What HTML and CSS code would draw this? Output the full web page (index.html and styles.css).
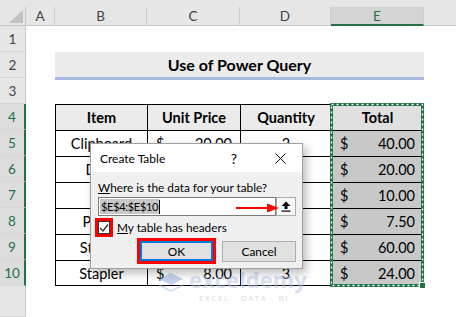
FILE: index.html
```html
<!DOCTYPE html>
<html lang="en">
<head>
  <meta charset="UTF-8">
  <meta name="viewport" content="width=device-width, initial-scale=1.0">
  <title>Use of Power Query - Create Table</title>
  <link rel="stylesheet" href="styles.css">
</head>
<body>

  <div class="sheet">
    <!-- column headers -->
    <div class="strip"></div>
    <div class="corner"><span class="tri"></span></div>
    <div class="ch">A</div>
    <div class="ch">B</div>
    <div class="ch">C</div>
    <div class="ch">D</div>
    <div class="ch sel">E</div>
    <div class="ch rest"></div>

    <!-- rows 1 - 3 -->
    <div class="rh">1</div><div class="blank"></div>
    <div class="rh">2</div><div class="cell"></div><div class="title">Use of Power Query</div><div class="cell"></div>
    <div class="rh">3</div><div class="blank"></div>

    <!-- table -->
    <div class="rh sel">4</div><div class="cell"></div>
    <div class="tc th">Item</div>
    <div class="tc th">Unit Price</div>
    <div class="tc th">Quantity</div>
    <div class="tc th tot r">Total</div>
    <div class="cell"></div>

    <div class="rh sel">5</div><div class="cell"></div>
    <div class="tc">Clipboard</div>
    <div class="tc money"><span>$</span><span>20.00</span></div>
    <div class="tc">2</div>
    <div class="tc money hl r"><span>$</span><span>40.00</span></div>
    <div class="cell"></div>

    <div class="rh sel">6</div><div class="cell"></div>
    <div class="tc">Desk</div>
    <div class="tc money"><span>$</span><span>10.00</span></div>
    <div class="tc">2</div>
    <div class="tc money hl r"><span>$</span><span>20.00</span></div>
    <div class="cell"></div>

    <div class="rh sel">7</div><div class="cell"></div>
    <div class="tc">Pin</div>
    <div class="tc money"><span>$</span><span>2.00</span></div>
    <div class="tc">5</div>
    <div class="tc money hl r"><span>$</span><span>10.00</span></div>
    <div class="cell"></div>

    <div class="rh sel">8</div><div class="cell"></div>
    <div class="tc">Pencil</div>
    <div class="tc money"><span>$</span><span>1.50</span></div>
    <div class="tc">5</div>
    <div class="tc money hl r"><span>$</span><span>7.50</span></div>
    <div class="cell"></div>

    <div class="rh sel">9</div><div class="cell"></div>
    <div class="tc">Sticker</div>
    <div class="tc money"><span>$</span><span>12.00</span></div>
    <div class="tc">5</div>
    <div class="tc money hl r"><span>$</span><span>60.00</span></div>
    <div class="cell"></div>

    <div class="rh sel">10</div><div class="cell"></div>
    <div class="tc b">Stapler</div>
    <div class="tc money b"><span>$</span><span>8.00</span></div>
    <div class="tc b">3</div>
    <div class="tc money hl r b"><span>$</span><span>24.00</span></div>
    <div class="cell"></div>

    <div class="rh"></div><div class="blank"></div>

    <!-- marching ants round E4:E10 -->
    <svg class="ants" width="96" height="186" viewBox="0 0 96 186">
      <rect x="1.5" y="1.5" width="91" height="181" fill="none" stroke="#217346" stroke-width="3"/>
      <rect x="1.5" y="1.5" width="91" height="181" fill="none" stroke="#fff" stroke-width="1.3" stroke-dasharray="2 3"/>
      <rect x="89.5" y="179.5" width="6" height="6" fill="#217346" stroke="#fff" stroke-width="1"/>
    </svg>

    <!-- watermark -->
    <div class="watermark">
      <svg class="wm-logo" width="28" height="22" viewBox="0 0 28 22">
        <path d="M2 8 L14 2 L26 8 L14 14 Z" fill="#8fa8dc"/>
        <path d="M2 13 L14 19 L26 13 L26 15 L14 21 L2 15 Z" fill="#a9bce6"/>
      </svg>
      <div class="wm-text">
        <div class="wm-name">exceldemy</div>
        <div class="wm-tag">EXCEL · DATA · BI</div>
      </div>
    </div>

    <!-- Create Table dialog -->
    <div class="dialog">
      <div class="dlg-head">
        <span class="name">Create Table</span>
        <span class="help">?</span>
        <span class="close">
          <svg width="11" height="11" viewBox="0 0 11 11"><path d="M0.5 0.5 L10.5 10.5 M10.5 0.5 L0.5 10.5" stroke="#000" stroke-width="1"/></svg>
        </span>
      </div>
      <div class="dlg-body">
        <div class="label"><u>W</u>here is the data for your table?</div>
        <div class="range">
          <div class="field"><span class="sel-text">$E$4:$E$10</span><span class="caret"></span></div>
          <div class="pick">
            <svg width="10" height="11" viewBox="0 0 10 11">
              <path d="M5 0.5 L9.5 5 L6.5 5 L6.5 8 L3.5 8 L3.5 5 L0.5 5 Z" fill="#000"/>
              <rect x="0.5" y="9.5" width="9" height="1.2" fill="#000"/>
            </svg>
          </div>
        </div>
        <div class="check-row">
          <span class="mark">
            <span class="box">
              <svg width="10" height="10" viewBox="0 0 10 10"><path d="M1 5 L4 8 L9 1.5" fill="none" stroke="#333" stroke-width="1.4"/></svg>
            </span>
          </span>
          <span class="check-label"><u>M</u>y table has headers</span>
        </div>
        <div class="buttons">
          <span class="ok-wrap"><span class="btn ok">OK</span></span>
          <span class="btn cancel">Cancel</span>
        </div>
      </div>
      <svg class="arrow" width="43" height="10" viewBox="0 0 43 10">
        <path d="M0 5 L32 5" stroke="#ff0000" stroke-width="2"/>
        <path d="M31 0.5 L43 5 L31 9.5 Z" fill="#ff0000"/>
      </svg>
    </div>
  </div>

</body>
</html>
```

FILE: styles.css
```css
* {
  box-sizing: border-box;
}

body {
  margin: 0;
  background: #fff;
  font-family: Lato, "Liberation Sans", sans-serif;
  overflow: hidden;
}

.sheet {
  position: relative;
  display: grid;
  grid-template-columns: 26px 29px 92px 93px 91px 93px 1fr;
  grid-template-rows: 7px 19px repeat(10, 26px) 31px;
  width: 456px;
  height: 317px;
  overflow: hidden;
}

/* headers */
.strip {
  grid-column: 1 / -1;
  background: #e6e6e6;
}

.corner {
  background: #e6e6e6;
  border-right: 1px solid #c8c8c8;
  border-bottom: 1px solid #c8c8c8;
  display: flex;
  align-items: flex-end;
  justify-content: flex-end;
  padding: 0 2px 2px 0;
}

.tri {
  width: 0;
  height: 0;
  border-left: 14px solid transparent;
  border-bottom: 13px solid #c2c2c2;
}

.ch {
  background: #e6e6e6;
  border-right: 1px solid #cdcdcd;
  border-bottom: 1px solid #c8c8c8;
  display: flex;
  align-items: center;
  justify-content: center;
  font-size: 13.5px;
  color: #444;
}

.ch.sel {
  background: #d4d4d4;
  color: #217346;
  border-bottom: 2px solid #217346;
}

.ch.rest {
  border-right: none;
}

.rh {
  background: #e6e6e6;
  border-right: 1px solid #c8c8c8;
  border-bottom: 1px solid #d6d6d6;
  display: flex;
  align-items: center;
  justify-content: center;
  font-size: 13.5px;
  color: #444;
}

.rh.sel {
  background: #dcdcdc;
  color: #217346;
  border-right: 2px solid #217346;
}

/* cells */
.blank {
  grid-column: 2 / -1;
}

.title {
  grid-column: 3 / 7;
  height: 28px;
  background: #ececec;
  border-bottom: 3px solid #a7b9de;
  display: flex;
  align-items: center;
  justify-content: center;
  font-size: 16px;
  font-weight: bold;
  color: #000;
}

.tc {
  border-left: 1px solid #000;
  border-top: 1px solid #000;
  display: flex;
  align-items: center;
  justify-content: center;
  font-size: 14.5px;
  color: #000;
}

.tc.r {
  border-right: 1px solid #000;
}

.tc.b {
  border-bottom: 1px solid #000;
}

.th {
  background: #ebebeb;
  font-weight: bold;
}

.th.tot {
  background: #e0e0e0;
}

.tc.money {
  justify-content: space-between;
  padding: 0 8px;
}

.tc.hl {
  background: #c8c8c8;
}

.ants {
  position: absolute;
  left: 330px;
  top: 103px;
  z-index: 2;
}

/* watermark */
.watermark {
  position: absolute;
  left: 157px;
  top: 268px;
  display: flex;
  align-items: flex-start;
  gap: 4px;
  opacity: 0.5;
  z-index: 3;
}

.wm-logo {
  margin-top: 3px;
}

.wm-name {
  font-family: "Open Sans", sans-serif;
  font-size: 22px;
  font-weight: bold;
  color: #b5c5e8;
  line-height: 22px;
}

.wm-tag {
  font-family: "Open Sans", sans-serif;
  font-size: 8px;
  letter-spacing: 1.6px;
  color: #b0b8c8;
  margin: 2px 0 0 10px;
}

/* dialog */
.dialog {
  position: absolute;
  left: 90px;
  top: 143px;
  width: 213px;
  height: 126px;
  background: #f0f0f0;
  border: 1px solid #a0a0a0;
  box-shadow: 3px 4px 9px rgba(0, 0, 0, 0.28);
  font-family: Lato, "Noto Sans", sans-serif;
  font-size: 11.8px;
  color: #000;
  z-index: 5;
}

.dlg-head {
  height: 28px;
  background: #fff;
  display: flex;
  align-items: center;
  padding-left: 9px;
}

.dlg-head .name {
  flex: 1;
  font-size: 12px;
}

.help {
  width: 20px;
  text-align: center;
  font-size: 14px;
  margin-right: 14px;
}

.close {
  width: 44px;
  display: flex;
  justify-content: center;
}

.dlg-body {
  padding: 8px 6px 0 7px;
}

.label {
  height: 16px;
  line-height: 16px;
}

.range {
  display: flex;
  height: 19px;
  margin-top: 1px;
}

.field {
  width: 178px;
  background: #fff;
  border: 1px solid #7a7a7a;
  display: flex;
  align-items: center;
  padding-left: 1px;
}

.sel-text {
  background: #c8c8c8;
  font-size: 11px;
  letter-spacing: -0.3px;
  line-height: 15px;
  padding: 0 1px;
}

.caret {
  width: 1px;
  height: 14px;
  background: #000;
}

.pick {
  width: 20px;
  background: #f7f7f7;
  border: 1px solid #adadad;
  display: flex;
  align-items: center;
  justify-content: center;
}

.check-row {
  display: flex;
  align-items: center;
  height: 19px;
  margin: 2px 0 0 -3px;
}

.mark {
  width: 18px;
  height: 19px;
  border: 3px solid #ff0000;
  display: flex;
  align-items: center;
  justify-content: center;
}

.box {
  width: 12px;
  height: 13px;
  border: 1px solid #333;
  background: #fff;
  display: flex;
  align-items: center;
  justify-content: center;
}

.check-label {
  margin-left: 4px;
}

.buttons {
  display: flex;
  align-items: center;
  margin-top: 1px;
}

.ok-wrap {
  margin-left: 39px;
  border: 3px solid #ff0000;
  display: flex;
}

.btn {
  display: flex;
  align-items: center;
  justify-content: center;
  background: #e1e1e1;
  border: 1px solid #adadad;
}

.btn.ok {
  width: 73px;
  height: 20px;
  border: 2px solid #0078d7;
}

.btn.cancel {
  width: 74px;
  height: 21px;
  margin-left: 6px;
}

.arrow {
  position: absolute;
  left: 145px;
  top: 59px;
}
```
